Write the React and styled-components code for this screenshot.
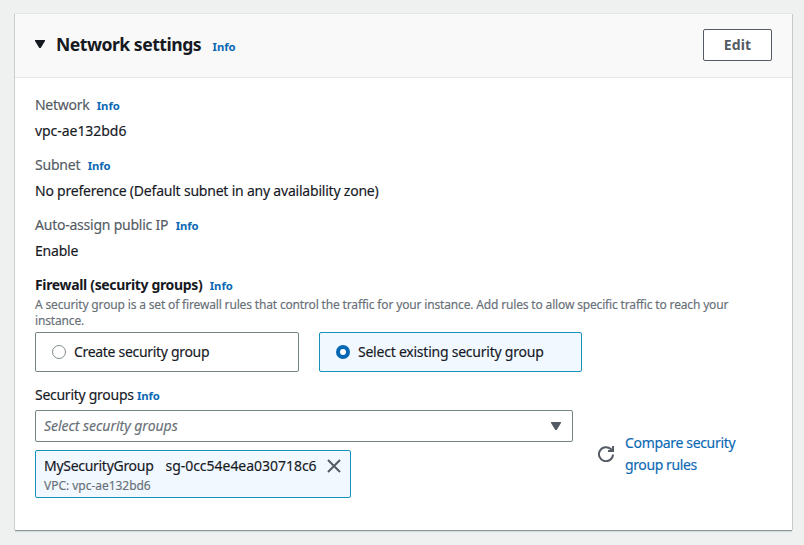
import React from 'react';
import styled, { createGlobalStyle } from 'styled-components';

const Global = createGlobalStyle`
  * { box-sizing: border-box; }
  body {
    margin: 0;
    background: #eff1f1;
    color: #16191f;
    font: 400 14px/22px "Noto Sans", "Open Sans", sans-serif;
    font-kerning: normal;
  }
`;

const Page = styled.main`
  height: 545px;
  padding: 14px 12px 15px 15px;
  overflow: hidden;
`;

const Card = styled.section`
  width: 777px;
  height: 516px;
  background: #fff;
  box-shadow: 0 -1px 0 #e3e6e6, -1px 0 0 #c9cdcf, 1px 0 0 #c4c9cb, 0 1px 0 #8d989c, 0 2px 1px #d5dadb;
`;

const Header = styled.header`
  display: flex;
  align-items: center;
  height: 64px;
  padding: 0 20px 2px;
  background: #f9f9f9;
  border-bottom: 1px solid #e5e8e8;
`;

const Caret = styled.svg`
  display: block;
  flex: none;
  width: 10px;
  height: 8px;
  margin-bottom: ${(p) => p.$lift ?? 0}px;
  fill: ${(p) => p.$color};
`;

const Heading = styled.div`
  display: flex;
  align-items: baseline;
  margin: 2px 0 0 11px;
`;

const Title = styled.h2`
  margin: 0;
  font-size: 17.6px;
  font-weight: 700;
  line-height: 22px;
  letter-spacing: -0.5px;
`;

const Info = styled.a`
  margin-left: ${(p) => p.$gap ?? 7.4}px;
  color: #0a68b4;
  font-size: 11.3px;
  font-weight: 700;
  letter-spacing: -0.05px;
  line-height: 22px;
  text-decoration: none;
`;

const Button = styled.button`
  width: 69px;
  height: 32px;
  margin-left: auto;
  padding: 0;
  background: #fff;
  border: 1px solid #545b64;
  border-radius: 2px;
  color: #545b64;
  font: 700 14px/22px "Noto Sans", sans-serif;
  letter-spacing: 0.15px;
`;

const Body = styled.div`
  padding: 16px 20px 0;
`;

const Field = styled.div`
  margin-bottom: 12px;
`;

const Line = styled.div`
  display: flex;
  align-items: baseline;
  height: 22px;
`;

const Text = styled.span`
  color: ${(p) => p.$color ?? '#16191f'};
  font-weight: ${(p) => p.$weight ?? 400};
  font-style: ${(p) => (p.$italic ? 'italic' : 'normal')};
  letter-spacing: ${(p) => p.$track ?? 0}px;
  -webkit-text-stroke: ${(p) => (p.$weight ? 0 : 0.15)}px currentColor;
  white-space: nowrap;
`;

const Value = styled.div`
  margin-top: 4px;
`;

const Description = styled.p`
  width: 705px;
  margin: 1px 0 3px;
  color: #687078;
  font-size: 12px;
  line-height: 16px;
  letter-spacing: -0.158px;
  -webkit-text-stroke: 0.15px currentColor;
`;

const Tiles = styled.div`
  display: grid;
  grid-template-columns: 264px 263px;
  gap: 20px;
  margin-bottom: 12px;
`;

const Tile = styled.label`
  display: flex;
  align-items: center;
  height: 40px;
  padding: 0 16px;
  background: ${(p) => (p.$selected ? '#f1f8ff' : '#fff')};
  border: 1px solid ${(p) => (p.$selected ? '#1593bd' : '#738484')};
  border-radius: 2px;
`;

const Radio = styled.span`
  flex: none;
  width: 14px;
  height: 14px;
  margin-right: 8px;
  background: #fff;
  border: ${(p) => (p.$selected ? '4px solid #0568b5' : '1px solid #7f8c8d')};
  border-radius: 50%;
`;

const GroupRow = styled.div`
  display: flex;
  align-items: flex-start;
`;

const GroupField = styled.div`
  width: 538px;
`;

const Select = styled.div`
  display: flex;
  align-items: center;
  justify-content: space-between;
  height: 32px;
  margin: 4px 0 8px;
  padding: 0 11px 0 8px;
  background: #fff;
  border: 1px solid #738484;
  border-radius: 2px;
`;

const Token = styled.div`
  display: flex;
  width: 316px;
  height: 48px;
  padding: 4px 8px;
  background: #f1f8ff;
  border: 1px solid #1593bd;
  border-radius: 2px;
`;

const TokenNames = styled.div`
  display: flex;
  gap: 12px;
  width: 283px;
`;

const TokenMeta = styled.div`
  color: #687078;
  font-size: 12px;
  line-height: 17px;
  letter-spacing: -0.03px;
  -webkit-text-stroke: 0.15px currentColor;
`;

const CloseIcon = styled.svg`
  display: block;
  width: 14px;
  height: 14px;
  margin-top: 4px;
  stroke: #545b64;
  stroke-width: 2;
`;

const Actions = styled.div`
  display: flex;
  align-items: center;
  height: 44px;
  margin: 48px 0 0 25px;
`;

const RefreshIcon = styled.svg`
  display: block;
  width: 16px;
  height: 16px;
  margin-right: 11px;
  fill: none;
  stroke: #545b64;
  stroke-width: 2;
`;

const CompareLink = styled.a`
  display: flex;
  flex-direction: column;
`;

const fields = [
  { label: 'Network', track: -0.28, value: 'vpc-ae132bd6', valueTrack: -0.05 },
  { label: 'Subnet', track: -0.22, value: 'No preference (Default subnet in any availability zone)', valueTrack: -0.21 },
  { label: 'Auto-assign public IP', track: -0.23, value: 'Enable', valueTrack: -0.2 },
];

const Triangle = ({ color, lift }) => (
  <Caret $color={color} $lift={lift} viewBox="0 0 10 8">
    <path d="M0 0h10v1L5.7 8H4.3L0 1z" />
  </Caret>
);

export default function App() {
  return (
    <Page>
      <Global />
      <Card>
        <Header>
          <Triangle color="#16191f" lift={2} />
          <Heading>
            <Title>Network settings</Title>
            <Info $gap={11.5}>Info</Info>
          </Heading>
          <Button>Edit</Button>
        </Header>
        <Body>
          {fields.map((f) => (
            <Field key={f.label}>
              <Line>
                <Text $color="#545b64" $track={f.track}>{f.label}</Text>
                <Info>Info</Info>
              </Line>
              <Value>
                <Text $track={f.valueTrack}>{f.value}</Text>
              </Value>
            </Field>
          ))}
          <Line>
            <Text $weight={700} $track={-0.34}>Firewall (security groups)</Text>
            <Info>Info</Info>
          </Line>
          <Description>
            A security group is a set of firewall rules that control the traffic for your instance. Add rules to allow specific traffic to reach your instance.
          </Description>
          <Tiles>
            <Tile>
              <Radio />
              <Text $track={-0.31}>Create security group</Text>
            </Tile>
            <Tile $selected>
              <Radio $selected />
              <Text $track={-0.23}>Select existing security group</Text>
            </Tile>
          </Tiles>
          <GroupRow>
            <GroupField>
              <Line>
                <Text $track={-0.27}>Security groups</Text>
                <Info $gap={3.2}>Info</Info>
              </Line>
              <Select>
                <Text $italic $color="#687078" $track={-0.03}>Select security groups</Text>
                <Triangle color="#545b64" />
              </Select>
              <Token>
                <div>
                  <TokenNames>
                    <Text $track={-0.29}>MySecurityGroup</Text>
                    <Text $track={-0.03}>sg-0cc54e4ea030718c6</Text>
                  </TokenNames>
                  <TokenMeta>VPC: vpc-ae132bd6</TokenMeta>
                </div>
                <CloseIcon viewBox="0 0 14 14">
                  <path d="M1 1l12 12M13 1L1 13" />
                </CloseIcon>
              </Token>
            </GroupField>
            <Actions>
              <RefreshIcon viewBox="0 0 16 16">
                <path d="M15 8.5a7 7 0 1 1-2.2-5.4L15 5M15 0v5h-5" />
              </RefreshIcon>
              <CompareLink>
                <Text $color="#0a68b4" $track={-0.33}>Compare security</Text>
                <Text $color="#0a68b4" $track={-0.4}>group rules</Text>
              </CompareLink>
            </Actions>
          </GroupRow>
        </Body>
      </Card>
    </Page>
  );
}
